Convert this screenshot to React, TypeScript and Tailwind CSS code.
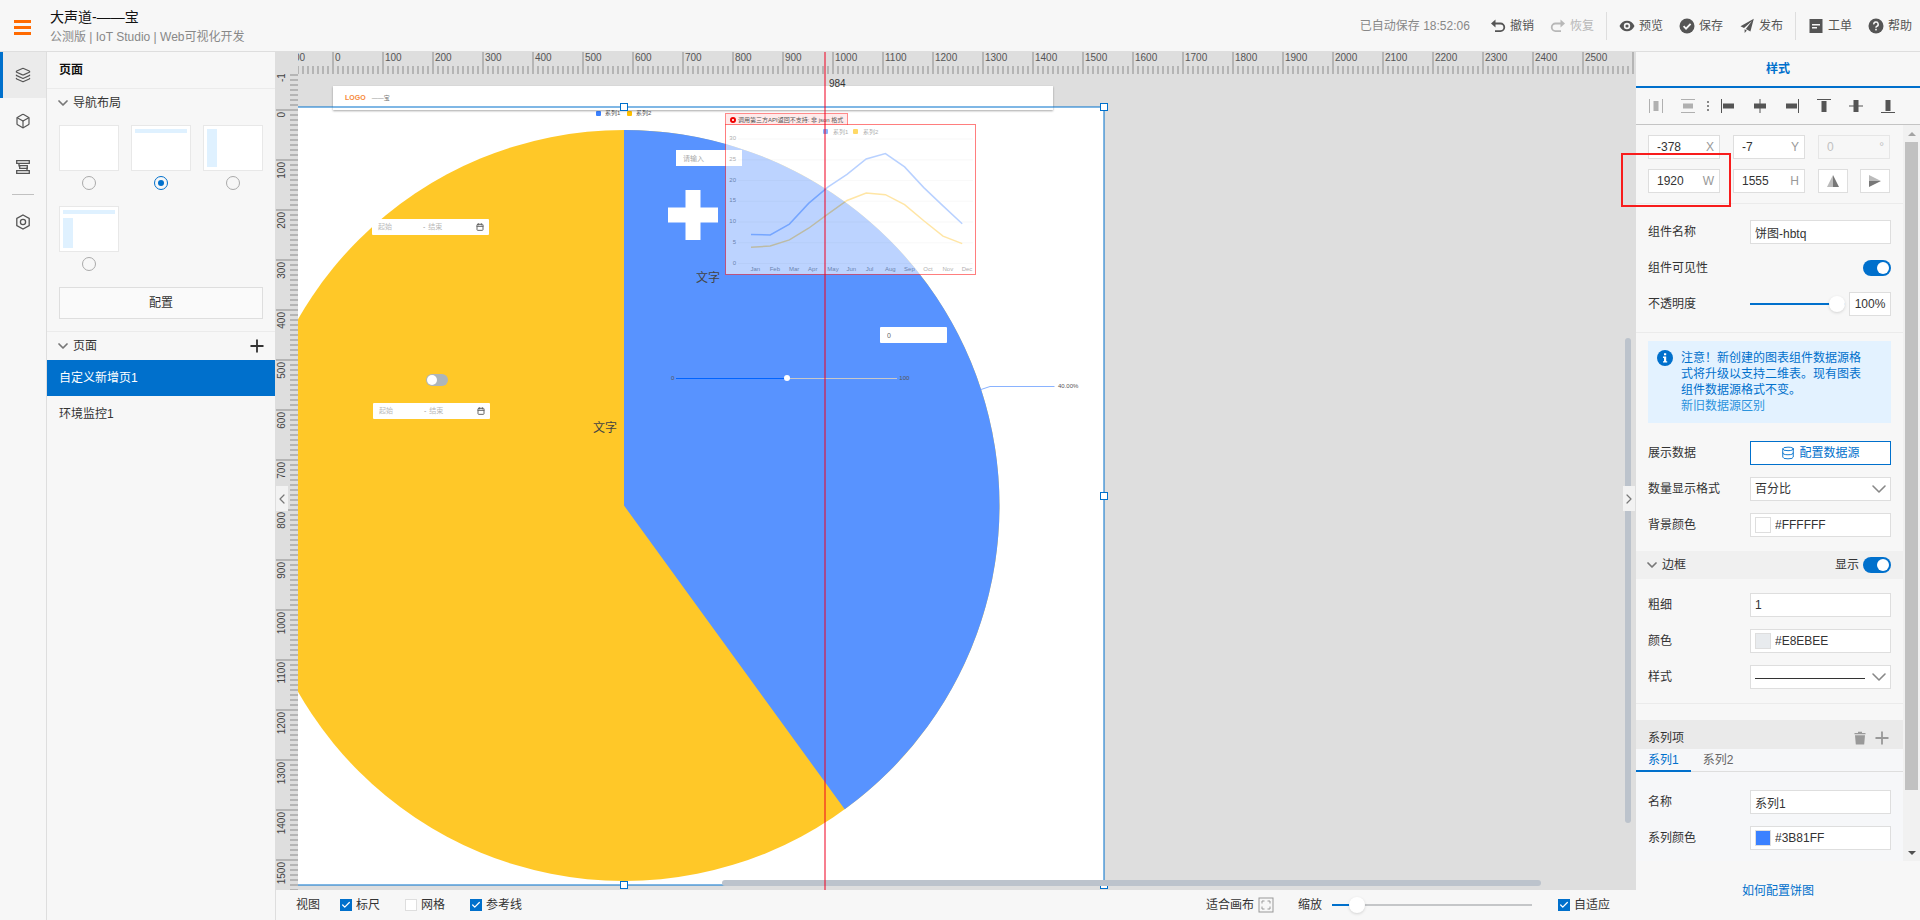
import { useState } from 'react';
import type { ReactNode } from 'react';
import { Box, Calendar, Check, ChevronDown, ChevronLeft, ChevronRight, Database, Layers, Plus } from 'lucide-react';
import clsx from 'clsx';

const MONTHS = ['Jan', 'Feb', 'Mar', 'Apr', 'May', 'Jun', 'Jul', 'Aug', 'Sep', 'Oct', 'Nov', 'Dec'];
const SERIES_1 = [7, 6.9, 9.5, 14.5, 18.4, 21.5, 25.2, 26.5, 23.3, 18.3, 13.9, 9.6];
const SERIES_2 = [3.9, 4.2, 5.7, 8.5, 11.9, 15.2, 17, 16.6, 14.2, 10.3, 6.6, 4.8];

// ruler labels from -100 up to the end of the page
const rulerSteps = (end: number) => Array.from({ length: end / 100 + 2 }, (_, i) => (i - 1) * 100);

/* ---------- form controls ---------- */

function Checkbox({ label, defaultChecked }: { label: string; defaultChecked?: boolean }) {
  return (
    <label className="flex items-center gap-1">
      <span className="relative flex">
        <input
          type="checkbox"
          defaultChecked={defaultChecked}
          className="peer h-3 w-3 appearance-none border border-[#dedede] bg-white checked:border-[#0070cc] checked:bg-[#0070cc]"
        />
        <Check className="pointer-events-none absolute inset-0 hidden h-3 w-3 p-px text-white peer-checked:block" strokeWidth={3} />
      </span>
      {label}
    </label>
  );
}

function Switch({ id, label }: { id?: string; label: string }) {
  return (
    <input
      id={id}
      type="checkbox"
      role="switch"
      aria-label={label}
      defaultChecked
      className="flex h-4 w-7 appearance-none items-center rounded-full bg-[#b5b5b5] px-[2px] before:h-3 before:w-3 before:rounded-full before:bg-white checked:justify-end checked:bg-[#0070cc]"
    />
  );
}

interface SliderProps {
  id: string;
  label: string;
  initial: number;
  className: string;
}

function Slider({ id, label, initial, className }: SliderProps) {
  const [value, setValue] = useState(initial);
  return (
    <input
      id={id}
      type="range"
      aria-label={label}
      value={value}
      onChange={(e) => setValue(Number(e.target.value))}
      style={{ backgroundImage: `linear-gradient(to right, #0070cc ${value}%, #c4c6c8 ${value}%)` }}
      className={clsx(
        'h-[2px] appearance-none [&::-webkit-slider-thumb]:h-4 [&::-webkit-slider-thumb]:w-4 [&::-webkit-slider-thumb]:appearance-none [&::-webkit-slider-thumb]:rounded-full [&::-webkit-slider-thumb]:bg-white [&::-webkit-slider-thumb]:shadow-[0_1px_3px_rgba(0,0,0,0.15)]',
        className,
      )}
    />
  );
}

function Field({ label, htmlFor, children }: { label: string; htmlFor?: string; children: ReactNode }) {
  return (
    <div className="flex h-6 items-center justify-between px-3">
      <label htmlFor={htmlFor}>{label}</label>
      {children}
    </div>
  );
}

function TextInput({ id, value }: { id: string; value: string }) {
  return <input id={id} defaultValue={value} className="h-6 w-[141px] border border-[#dedede] bg-white px-1 outline-none" />;
}

function ColorInput({ id, value, swatch }: { id: string; value: string; swatch: string }) {
  return (
    <div className="flex h-6 w-[141px] items-center gap-1 border border-[#dedede] bg-white px-1">
      <span className={clsx('h-4 w-4 border border-[#dedede]', swatch)} />
      <input id={id} defaultValue={value} className="w-24 outline-none" />
    </div>
  );
}

function SizeInput({ label, value, disabled }: { label: string; value: string; disabled?: boolean }) {
  return (
    <label
      className={clsx(
        'flex h-6 w-[72px] items-center border pr-[5px] pl-2',
        disabled ? 'border-[#e6e6e6] text-[#c1c1c1]' : 'border-[#dedede] bg-white',
      )}
    >
      <input defaultValue={value} disabled={disabled} className="w-full min-w-0 outline-none" />
      <span className={disabled ? 'text-[#c1c1c1]' : 'text-[#999]'}>{label}</span>
    </label>
  );
}

/* ---------- icons ---------- */

function Glyph({ children, className }: { children: ReactNode; className?: string }) {
  return (
    <svg viewBox="0 0 16 16" fill="currentColor" className={clsx('h-4 w-4 shrink-0', className)} aria-hidden="true">
      {children}
    </svg>
  );
}

const UndoGlyph = () => (
  <Glyph>
    <path d="M1 5.5 5.5 1.5V9.5Z" />
    <path d="M4 5.5H10.5A3.8 3.8 0 0 1 10.5 13.1H5" fill="none" stroke="currentColor" strokeWidth="1.8" />
  </Glyph>
);
const RedoGlyph = () => (
  <Glyph>
    <path d="M15 5.5 10.5 1.5V9.5Z" />
    <path d="M12 5.5H5.5A3.8 3.8 0 0 0 5.5 13.1H11" fill="none" stroke="currentColor" strokeWidth="1.8" />
  </Glyph>
);
const EyeGlyph = () => (
  <Glyph>
    <path fillRule="evenodd" d="M0.5 8C2 4.5 5 2.8 8 2.8S14 4.5 15.5 8C14 11.5 11 13.2 8 13.2S2 11.5 0.5 8ZM8 4.8A3.2 3.2 0 1 0 8 11.2A3.2 3.2 0 1 0 8 4.8ZM8 6.4A1.6 1.6 0 1 1 8 9.6A1.6 1.6 0 1 1 8 6.4Z" />
  </Glyph>
);
const SaveGlyph = () => (
  <Glyph>
    <circle cx="8" cy="8" r="7.5" />
    <path d="M4.6 8.2 7 10.6 11.6 5.8" fill="none" stroke="#f7f7f7" strokeWidth="1.8" />
  </Glyph>
);
const SendGlyph = () => (
  <Glyph>
    <path d="M14.8 0.8 1.5 8.2 5 10 13 3 6.8 11 11.4 13.6Z" />
    <path d="M5.6 11.2V15L7.8 12.4Z" />
  </Glyph>
);
const TicketGlyph = () => (
  <Glyph>
    <path fillRule="evenodd" d="M1.5 1H14.5V15H1.5ZM4 6V7.4H12V6ZM4 9V10.4H9V9Z" />
  </Glyph>
);
const HelpGlyph = () => (
  <Glyph>
    <circle cx="8" cy="8" r="7.5" />
    <path d="M5.8 6.4A2.2 2.2 0 1 1 8.6 8.4Q8 8.7 8 9.8" fill="none" stroke="#f7f7f7" strokeWidth="1.5" />
    <rect x="7.2" y="10.8" width="1.6" height="1.6" fill="#f7f7f7" />
  </Glyph>
);

/* ---------- header ---------- */

function ToolButton({ icon, label, disabled }: { icon: ReactNode; label: string; disabled?: boolean }) {
  return (
    <button disabled={disabled} className={clsx('flex items-center gap-1', disabled ? 'text-[#b8b8b8]' : 'text-[#555]')}>
      {icon}
      {label}
    </button>
  );
}

function Header() {
  return (
    <header className="flex h-[52px] shrink-0 items-center border-b border-[#dedede] pr-2 pl-[14px]">
      <button aria-label="菜单" className="flex w-[17px] flex-col gap-[3px] pt-[3px]">
        <span className="h-[3px] bg-[#ff6a00]" />
        <span className="h-[3px] bg-[#ff6a00]" />
        <span className="h-[3px] bg-[#ff6a00]" />
      </button>
      <div className="ml-[19px] pt-[2px]">
        <h1 className="text-sm leading-5 text-[#111]">大声道-——宝</h1>
        <p className="leading-5 text-[#888]">公测版 | IoT Studio | Web可视化开发</p>
      </div>
      <div className="ml-auto flex items-center">
        <span className="mr-5 text-[#888]">已自动保存 18:52:06</span>
        <div className="flex gap-4">
          <ToolButton icon={<UndoGlyph />} label="撤销" />
          <ToolButton icon={<RedoGlyph />} label="恢复" disabled />
        </div>
        <span className="mx-3 h-7 w-px bg-[#dedede]" />
        <div className="flex gap-4">
          <ToolButton icon={<EyeGlyph />} label="预览" />
          <ToolButton icon={<SaveGlyph />} label="保存" />
          <ToolButton icon={<SendGlyph />} label="发布" />
        </div>
        <span className="mx-3 h-7 w-px bg-[#dedede]" />
        <div className="flex gap-4">
          <ToolButton icon={<TicketGlyph />} label="工单" />
          <ToolButton icon={<HelpGlyph />} label="帮助" />
        </div>
      </div>
    </header>
  );
}

/* ---------- left side ---------- */

function Rail() {
  const item = 'flex h-[46px] w-full items-center justify-center';
  return (
    <nav className="flex w-[47px] shrink-0 flex-col items-center border-r border-[#dedede] text-[#555]">
      <button aria-label="页面" className="flex h-[46px] w-full items-center border-l-[3px] border-[#0070cc] bg-[#ebebeb] pl-3">
        <Layers className="h-4 w-4" strokeWidth={1.8} />
      </button>
      <button aria-label="组件" className={item}>
        <Box className="h-4 w-4" strokeWidth={1.8} />
      </button>
      <button aria-label="图层" className={item}>
        <Glyph>
          <path d="M1.7 1.7H14.3V4.3H1.7ZM4.7 6.7H12.3V9.3H4.7ZM1.7 11.7H14.3V14.3H1.7Z" fill="none" stroke="currentColor" strokeWidth="1.3" />
          <path d="M4 4V7.5M12 8.5V12" stroke="currentColor" strokeWidth="1.3" />
        </Glyph>
      </button>
      <span className="my-1 h-px w-[22px] bg-[#c1c1c1]" />
      <button aria-label="设置" className={item}>
        <Glyph>
          <path d="M8 1 14.2 4.5V11.5L8 15 1.8 11.5V4.5Z" fill="none" stroke="currentColor" strokeWidth="1.3" />
          <circle cx="8" cy="8" r="2.6" fill="none" stroke="currentColor" strokeWidth="1.3" />
        </Glyph>
      </button>
    </nav>
  );
}

const LAYOUTS = [
  { name: '空白', top: false, side: false },
  { name: '顶部导航', top: true, side: false },
  { name: '左侧导航', top: false, side: true },
  { name: '顶部左侧导航', top: true, side: true },
];

function PagePanel() {
  const [page, setPage] = useState('自定义新增页1');
  return (
    <aside className="w-[228px] shrink-0">
      <h2 className="flex h-[37px] items-center border-b border-[#ebebeb] pl-3 font-bold text-[#111]">页面</h2>
      <section className="border-b border-[#ebebeb] px-3 pb-3">
        <button className="-ml-1 flex h-7 items-center gap-[2px]">
          <ChevronDown className="h-4 w-4 text-[#777]" strokeWidth={2.6} />
          导航布局
        </button>
        <div className="grid grid-cols-3 gap-x-3 gap-y-4 pt-2">
          {LAYOUTS.map((layout) => (
            <label key={layout.name} className="flex flex-col items-center gap-[5px]">
              <span className="flex h-[46px] w-[60px] flex-col gap-1 border border-[#e8e8e8] bg-white p-[3px]">
                {layout.top && <span className="h-1 w-full bg-[#dff1ff]" />}
                {layout.side && <span className="w-[10px] flex-1 bg-[#dff1ff]" />}
              </span>
              <input
                type="radio"
                name="layout"
                aria-label={layout.name}
                defaultChecked={layout.top && !layout.side}
                className="flex h-[14px] w-[14px] appearance-none items-center justify-center rounded-full border border-[#aaa] before:h-[6px] before:w-[6px] before:rounded-full checked:border-[#0070cc] checked:before:bg-[#0070cc]"
              />
            </label>
          ))}
        </div>
        <button className="mt-4 h-8 w-full border border-[#dedede] bg-[#fafafa]">配置</button>
      </section>
      <div className="flex h-7 items-center gap-[2px] px-2">
        <ChevronDown className="h-4 w-4 text-[#777]" strokeWidth={2.6} />
        <span>页面</span>
        <button aria-label="新增页面" className="ml-auto">
          <Plus className="h-5 w-5" strokeWidth={2.2} />
        </button>
      </div>
      <ul>
        {['自定义新增页1', '环境监控1'].map((name) => (
          <li key={name}>
            <button
              onClick={() => setPage(name)}
              className={clsx('h-9 w-full px-3 text-left', page === name && 'bg-[#0070cc] text-white')}
            >
              {name}
            </button>
          </li>
        ))}
      </ul>
    </aside>
  );
}

/* ---------- canvas ---------- */

function TopRuler() {
  return (
    <div className="flex h-[22px] min-w-0 flex-1 overflow-hidden">
      <div className="-ml-4 flex">
        {rulerSteps(2500).map((step) => (
          <div key={step} className="flex w-[50px] shrink-0 flex-col justify-between border-l-2 border-[#b5b5b5]">
            <span className="pl-px text-[10px] leading-3">{step}</span>
            <span className="h-2 bg-[repeating-linear-gradient(to_right,transparent_0_3px,#b5b5b5_3px_5px)]" />
          </div>
        ))}
        <span className="w-[2px] bg-[#b5b5b5]" />
      </div>
    </div>
  );
}

function SideRuler() {
  return (
    <div className="w-[22px] shrink-0 overflow-hidden">
      <div className="-mt-[15px]">
        {rulerSteps(1500).map((step) => (
          <div key={step} className="flex h-[50px] items-stretch justify-between border-t-2 border-[#b5b5b5]">
            <span className="mt-px h-fit rotate-180 text-[10px] leading-3 [writing-mode:vertical-rl]">{step}</span>
            <span className="w-2 bg-[repeating-linear-gradient(to_bottom,transparent_0_3px,#b5b5b5_3px_5px)]" />
          </div>
        ))}
      </div>
    </div>
  );
}

function PieChart() {
  return (
    <svg viewBox="0 0 960 778" className="absolute top-[33px] left-[-154px] h-[778px] w-[960px] bg-white">
      <circle cx="480" cy="398.5" r="375.5" fill="#ffc828" />
      <path d="M480 398.5V23A375.5 375.5 0 0 1 700.7 702.3Z" fill="#5893ff" />
      <path d="M837 282.5 846 279.5H910.5" fill="none" stroke="#8ab3ff" />
      <text x="914" y="281" fontSize="6" fill="#555">40.00%</text>
      <rect x="452" y="4" width="5" height="5" rx="1" fill="#3b81ff" />
      <text x="461" y="8" fontSize="6" fill="#555">系列1</text>
      <rect x="483" y="4" width="5" height="5" rx="1" fill="#ffc000" />
      <text x="492" y="8" fontSize="6" fill="#555">系列2</text>
    </svg>
  );
}

function toPoints(values: number[]) {
  return values.map((v, i) => `${25 + i * 19.2},${138.5 - v * 4.147}`).join(' ');
}

function LineChart() {
  return (
    <>
      <div className="absolute top-[39px] left-[427px] flex h-3 w-[123px] items-center gap-[2px] border border-b-0 border-[#ff8a8a] bg-[#ffeaea] pl-1">
        <svg viewBox="0 0 6 6" className="h-[6px] w-[6px] shrink-0">
          <circle cx="3" cy="3" r="3" fill="#f00000" />
          <path d="M2 2 4 4M4 2 2 4" stroke="#fff" strokeWidth="0.8" />
        </svg>
        <span className="text-[6px] leading-none whitespace-nowrap text-[#555]">调用第三方API返回不支持: 非 json 格式</span>
      </div>
      <div className="absolute top-[50px] left-[427px] h-[151px] w-[251px] border border-[#ff2a2a] bg-white opacity-60">
        <svg viewBox="0 0 249 149" className="h-full w-full" fontSize="6" fill="#777">
          {[0, 5, 10, 15, 20, 25, 30].map((v) => (
            <g key={v}>
              <path d={`M12 ${138.5 - v * 4.147}H247`} stroke="#eee" strokeWidth="0.6" />
              <text x="10" y={139.5 - v * 4.147} textAnchor="end">{v}</text>
            </g>
          ))}
          {MONTHS.map((m, i) => (
            <text key={m} x={24.5 + i * 19.2} y="146">{m}</text>
          ))}
          <polyline points={toPoints(SERIES_1)} fill="none" stroke="#8ab3ff" strokeWidth="1.5" />
          <polyline points={toPoints(SERIES_2)} fill="none" stroke="#ffd66b" strokeWidth="1.5" />
          <rect x="97" y="4" width="5" height="5" rx="1" fill="#3b81ff" />
          <text x="107" y="9">系列1</text>
          <rect x="127" y="4" width="5" height="5" rx="1" fill="#ffc000" />
          <text x="137" y="9">系列2</text>
        </svg>
      </div>
    </>
  );
}

function DateRange({ className }: { className: string }) {
  return (
    <div className={clsx('absolute flex h-4 w-[117px] items-center rounded-[1px] bg-white pr-[5px] pl-[6px] text-[7px] text-[#999]', className)}>
      <input aria-label="起始" placeholder="起始" className="w-[45px] outline-none placeholder:text-[#b8b8b8]" />
      <span className="mr-[3px]">-</span>
      <input aria-label="结束" placeholder="结束" className="w-11 min-w-0 outline-none placeholder:text-[#b8b8b8]" />
      <Calendar className="ml-auto h-2 w-2 shrink-0 text-[#666]" strokeWidth={3} />
    </div>
  );
}

function Handle({ className }: { className: string }) {
  return <span className={clsx('absolute h-2 w-2 border border-[#0070cc] bg-white', className)} />;
}

function Canvas() {
  const [level, setLevel] = useState(50);
  return (
    <div className="relative min-w-0 flex-1 overflow-hidden">
      <PieChart />
      <div className="absolute top-3 left-[35px] flex h-6 w-[720px] items-center gap-[6px] bg-white pl-3 shadow-[0_1px_2px_rgba(0,0,0,0.35)]">
        <span className="text-[7px] font-bold text-[#f68a3c]">LOGO</span>
        <span className="text-[6px] text-[#777]">——宝</span>
      </div>

      <input
        aria-label="请输入"
        placeholder="请输入"
        className="absolute top-[76px] left-[378px] h-4 w-[66px] bg-white px-[7px] text-[7px] outline-none placeholder:text-[#aaa]"
      />
      <svg viewBox="0 0 50 50" className="absolute top-[116px] left-[370px] h-[50px] w-[50px]">
        <path d="M17.5 0H32.5V17.5H50V32.5H32.5V50H17.5V32.5H0V17.5H17.5Z" fill="#fff" />
      </svg>
      <DateRange className="top-[145px] left-[74px]" />
      <DateRange className="top-[329px] left-[75px]" />
      <span className="absolute top-[196px] left-[398px] leading-4">文字</span>
      <span className="absolute top-[346px] left-[295px] leading-4">文字</span>
      <input
        aria-label="数值"
        defaultValue="0"
        className="absolute top-[253px] left-[582px] h-4 w-[67px] rounded-[1px] bg-white px-[7px] text-[7px] text-[#666] outline-none"
      />
      <input
        type="checkbox"
        role="switch"
        aria-label="开关"
        className="absolute top-[300px] left-[128px] flex h-3 w-[22px] appearance-none items-center rounded-full bg-[#adb5ba] px-px before:h-[10px] before:w-[10px] before:rounded-full before:bg-white checked:justify-end"
      />
      <div className="absolute top-[300px] left-[373px] flex h-2 items-center gap-[2px] text-[6px] text-[#555]">
        <span>0</span>
        <input
          type="range"
          aria-label="滑块"
          value={level}
          onChange={(e) => setLevel(Number(e.target.value))}
          style={{ backgroundImage: `linear-gradient(to right, #0064ff ${level}%, #c8c8c8 ${level}%)` }}
          className="h-px w-[221px] appearance-none [&::-webkit-slider-thumb]:h-[6px] [&::-webkit-slider-thumb]:w-[6px] [&::-webkit-slider-thumb]:appearance-none [&::-webkit-slider-thumb]:rounded-full [&::-webkit-slider-thumb]:bg-white"
        />
        <span>100</span>
      </div>
      <LineChart />

      {/* selection frame of the pie */}
      <div className="pointer-events-none absolute top-8 left-[-155px] h-[780px] w-[962px] border-2 border-[#0070cc]/50">
        <Handle className="-top-[5px] left-[475px]" />
        <Handle className="-top-[5px] -right-[5px]" />
        <Handle className="top-[384px] -right-[5px]" />
        <Handle className="-bottom-[5px] left-[475px]" />
        <Handle className="-right-[5px] -bottom-[5px]" />
      </div>

      <span className="absolute top-[264px] right-[5px] h-[485px] w-[6px] rounded-full bg-[#bcc3cc]" />
      <span className="absolute right-[95px] bottom-1 h-[6px] w-[819px] rounded-full bg-[#bcc3cc]" />
    </div>
  );
}

function StatusBar() {
  return (
    <footer className="flex h-[30px] shrink-0 items-center bg-[#f7f7f7] pr-[26px] pl-5">
      <span className="mr-5">视图</span>
      <div className="flex gap-[25px]">
        <Checkbox label="标尺" defaultChecked />
        <Checkbox label="网格" />
        <Checkbox label="参考线" defaultChecked />
      </div>
      <button className="ml-auto flex items-center gap-1">
        适合画布
        <svg viewBox="0 0 16 16" className="h-4 w-4" fill="none" stroke="#999">
          <rect x="1" y="1" width="14" height="14" />
          <path d="M4 6.5V4H6.5M9.5 4H12V6.5M12 9.5V12H9.5M6.5 12H4V9.5" />
        </svg>
      </button>
      <label htmlFor="zoom" className="mr-[10px] ml-6">缩放</label>
      <Slider id="zoom" label="缩放" initial={9} className="mr-[26px] w-[200px]" />
      <Checkbox label="自适应" defaultChecked />
    </footer>
  );
}

function Workspace() {
  const fold = 'absolute top-1/2 flex h-[25px] w-3 items-center justify-center bg-[#f2f2f2] text-[#777]';
  return (
    <main className="relative flex min-w-0 flex-1 flex-col border-l border-[#dedede]">
      <div className="relative flex min-h-0 flex-1 flex-col overflow-hidden bg-[#dedede] text-[#555]">
        <div className="flex shrink-0">
          <span className="w-[22px]" />
          <TopRuler />
        </div>
        <div className="flex min-h-0 flex-1 text-[#444]">
          <SideRuler />
          <Canvas />
        </div>
        <div className="pointer-events-none absolute inset-y-0 left-[548px] w-[2px] bg-[#f00020]/50" />
        <span className="absolute top-[26px] left-[553px] text-[10px] leading-3 text-[#333]">984</span>
      </div>
      <StatusBar />
      <button aria-label="收起左侧" className={clsx(fold, 'left-0')}>
        <ChevronLeft className="h-4 w-4 shrink-0" strokeWidth={1.8} />
      </button>
      <button aria-label="收起右侧" className={clsx(fold, 'right-px')}>
        <ChevronRight className="h-4 w-4 shrink-0" strokeWidth={1.8} />
      </button>
    </main>
  );
}

/* ---------- style panel ---------- */

function AlignBar() {
  return (
    <div className="flex h-[37px] items-center gap-4 border-b border-[#c4c4c4] px-3 text-[#555]">
      <button aria-label="水平等距" className="text-[#b0b0b0]">
        <Glyph><path d="M1 1H2V15H1ZM14 1H15V15H14ZM5.5 3H10.5V13H5.5Z" /></Glyph>
      </button>
      <button aria-label="垂直等距" className="text-[#b0b0b0]">
        <Glyph><path d="M1 1H15V2H1ZM1 14H15V15H1ZM3 5.5H13V10.5H3Z" /></Glyph>
      </button>
      <svg viewBox="0 0 2 10" className="-mx-[5px] h-[10px] w-[2px]" fill="#888">
        <path d="M0 0H2V2H0ZM0 4H2V6H0ZM0 8H2V10H0Z" />
      </svg>
      <button aria-label="左对齐"><Glyph><path d="M1 1H2V15H1ZM3 5.5H14V10.5H3Z" /></Glyph></button>
      <button aria-label="水平居中"><Glyph><path d="M7.5 1H8.5V15H7.5ZM2 5.5H14V10.5H2Z" /></Glyph></button>
      <button aria-label="右对齐"><Glyph><path d="M14 1H15V15H14ZM2 5.5H13V10.5H2Z" /></Glyph></button>
      <button aria-label="顶对齐"><Glyph><path d="M1 1H15V2H1ZM5.5 3H10.5V14H5.5Z" /></Glyph></button>
      <button aria-label="垂直居中"><Glyph><path d="M1 7.5H15V8.5H1ZM5.5 2H10.5V14H5.5Z" /></Glyph></button>
      <button aria-label="底对齐"><Glyph><path d="M1 14H15V15H1ZM5.5 2H10.5V13H5.5Z" /></Glyph></button>
    </div>
  );
}

function SeriesSection() {
  const [tab, setTab] = useState('系列1');
  return (
    <section className="flex-1 bg-[#f6f7f9]">
      <div className="flex h-[29px] items-center bg-[#eaeaea] pt-[6px] pr-[11px] pl-3">
        <span>系列项</span>
        <button aria-label="删除系列" className="ml-auto text-[#999]">
          <svg viewBox="0 0 12 14" className="h-[14px] w-3" fill="currentColor">
            <path d="M0.5 2H4V0.8H8V2H11.5V3.2H0.5ZM1 4.2H11L10.2 13.5H1.8Z" />
          </svg>
        </button>
        <button aria-label="新增系列" className="ml-[6px] text-[#999]">
          <Plus className="h-5 w-5" strokeWidth={2.2} />
        </button>
      </div>
      <div role="tablist" className="flex h-[23px] border-b border-[#dedede]">
        {['系列1', '系列2'].map((name) => (
          <button
            key={name}
            role="tab"
            aria-selected={tab === name}
            onClick={() => setTab(name)}
            className={clsx('h-[23px] border-b-2 px-3', tab === name ? 'border-[#0070cc] text-[#0070cc]' : 'border-transparent text-[#666]')}
          >
            {name}
          </button>
        ))}
      </div>
      <div className="flex flex-col gap-3 pt-[18px]">
        <Field label="名称" htmlFor="series-name">
          <TextInput id="series-name" value="系列1" />
        </Field>
        <Field label="系列颜色" htmlFor="series-color">
          <ColorInput id="series-color" value="#3B81FF" swatch="bg-[#3b81ff]" />
        </Field>
      </div>
    </section>
  );
}

function StylePanel() {
  const select = 'h-6 w-[141px] appearance-none border border-[#dedede] bg-white px-1 outline-none';
  const arrow = 'pointer-events-none absolute top-0 right-0 h-6 w-6 text-[#888]';
  return (
    <aside className="relative flex w-[284px] shrink-0 flex-col bg-[#f7f7f7]">
      <h2 className="flex h-9 shrink-0 items-center justify-center border-b-2 border-[#0070cc] font-bold text-[#0070cc]">样式</h2>
      <AlignBar />
      <div className="flex min-h-0 flex-1">
        <div className="flex min-w-0 flex-1 flex-col overflow-hidden">
          <section className="flex flex-col gap-[10px] border-b border-[#ebebeb] px-3 py-[10px]">
            <div className="flex gap-[13px]">
              <SizeInput label="X" value="-378" />
              <SizeInput label="Y" value="-7" />
              <SizeInput label="°" value="0" disabled />
            </div>
            <div className="flex gap-[13px]">
              <SizeInput label="W" value="1920" />
              <SizeInput label="H" value="1555" />
              <div className="flex gap-3">
                <button aria-label="水平翻转" className="flex h-6 w-[30px] items-center justify-center border border-[#dedede] bg-white">
                  <svg viewBox="0 0 12 12" className="h-3 w-3">
                    <path d="M6 0V12H0Z" fill="#bbb" />
                    <path d="M6 0V12H12Z" fill="#777" />
                  </svg>
                </button>
                <button aria-label="垂直翻转" className="flex h-6 w-[30px] items-center justify-center border border-[#dedede] bg-white">
                  <svg viewBox="0 0 12 12" className="h-3 w-3">
                    <path d="M0 0V6H12Z" fill="#bbb" />
                    <path d="M0 12V6H12Z" fill="#777" />
                  </svg>
                </button>
              </div>
            </div>
          </section>

          <section className="flex flex-col gap-3 border-b border-[#ebebeb] py-4">
            <Field label="组件名称" htmlFor="name">
              <TextInput id="name" value="饼图-hbtq" />
            </Field>
            <Field label="组件可见性" htmlFor="visible">
              <Switch id="visible" label="组件可见性" />
            </Field>
            <Field label="不透明度" htmlFor="opacity">
              <div className="flex items-center gap-1">
                <Slider id="opacity" label="不透明度" initial={100} className="w-[95px]" />
                <input aria-label="不透明度数值" defaultValue="100%" className="h-6 w-[42px] border border-[#dedede] bg-white px-1 text-center outline-none" />
              </div>
            </Field>
          </section>

          <div className="mx-3 mt-2 flex gap-2 bg-[#e3f2ff] py-[9px] pr-7 pl-[9px] leading-4 text-[#0070cc]">
            <svg viewBox="0 0 16 16" className="h-4 w-4 shrink-0">
              <circle cx="8" cy="8" r="8" fill="#0070cc" />
              <path d="M7 3.2H9.2V5.2H7ZM6 6.5H9.2V11.2H10.2V12.6H6V11.2H7V7.9H6Z" fill="#fff" />
            </svg>
            <p>
              注意！新创建的图表组件数据源格式将升级以支持二维表。现有图表组件数据源格式不变。
              <br />
              <a href="#diff" className="text-[#2b93dd]">新旧数据源区别</a>
            </p>
          </div>

          <section className="flex flex-col gap-3 pt-[18px] pb-[14px]">
            <Field label="展示数据" htmlFor="source">
              <button id="source" className="flex h-6 w-[141px] items-center justify-center gap-1 border border-[#0070cc] bg-white text-[#0070cc]">
                <Database className="h-[14px] w-[14px]" strokeWidth={1.6} />
                配置数据源
              </button>
            </Field>
            <Field label="数量显示格式" htmlFor="format">
              <div className="relative">
                <select id="format" className={select}>
                  <option>百分比</option>
                </select>
                <ChevronDown className={arrow} strokeWidth={1.6} />
              </div>
            </Field>
            <Field label="背景颜色" htmlFor="bg-color">
              <ColorInput id="bg-color" value="#FFFFFF" swatch="bg-white" />
            </Field>
          </section>

          <div className="flex h-7 shrink-0 items-center bg-[#f0f0f0] pr-3 pl-2">
            <ChevronDown className="mr-[2px] h-4 w-4 text-[#777]" strokeWidth={2.6} />
            <span>边框</span>
            <label htmlFor="border-on" className="mr-1 ml-auto">显示</label>
            <Switch id="border-on" label="显示" />
          </div>
          <section className="flex flex-col gap-3 border-b border-[#ebebeb] py-[14px]">
            <Field label="粗细" htmlFor="border-width">
              <TextInput id="border-width" value="1" />
            </Field>
            <Field label="颜色" htmlFor="border-color">
              <ColorInput id="border-color" value="#E8EBEE" swatch="bg-[#e8ebee]" />
            </Field>
            <Field label="样式" htmlFor="border-style">
              <div className="relative">
                <select id="border-style" className={select}>
                  <option value="solid" aria-label="实线"></option>
                </select>
                <span className="pointer-events-none absolute top-[13px] left-[5px] h-px w-[110px] bg-[#333]" />
                <ChevronDown className={arrow} strokeWidth={1.6} />
              </div>
            </Field>
          </section>
          <div className="h-4 shrink-0" />
          <SeriesSection />
        </div>

        <div className="flex w-[17px] shrink-0 flex-col items-center bg-[#f1f1f1]">
          <span className="flex h-[17px] items-center">
            <svg viewBox="0 0 8 4" className="h-1 w-2"><path d="M0 4 4 0 8 4Z" fill="#a3a3a3" /></svg>
          </span>
          <span className="w-[13px] grow-[12] bg-[#c1c1c1]" />
          <span className="grow" />
          <span className="flex h-[17px] items-center">
            <svg viewBox="0 0 8 4" className="h-1 w-2"><path d="M0 0 4 4 8 0Z" fill="#505050" /></svg>
          </span>
        </div>
      </div>
      <div className="flex h-[59px] shrink-0 items-center justify-center">
        <a href="#pie-help" className="text-[#0070cc]">如何配置饼图</a>
      </div>

      {/* highlight around the width field */}
      <div className="pointer-events-none absolute top-[101px] left-[-15px] h-[54px] w-[110px] border-2 border-[#f81c1c]" />
    </aside>
  );
}

export default function App() {
  return (
    <div className="flex h-screen flex-col overflow-hidden bg-[#f7f7f7] font-['Liberation_Sans','Noto_Sans_CJK_SC',sans-serif] text-xs text-[#333]">
      <Header />
      <div className="flex min-h-0 flex-1">
        <Rail />
        <PagePanel />
        <Workspace />
        <StylePanel />
      </div>
    </div>
  );
}
